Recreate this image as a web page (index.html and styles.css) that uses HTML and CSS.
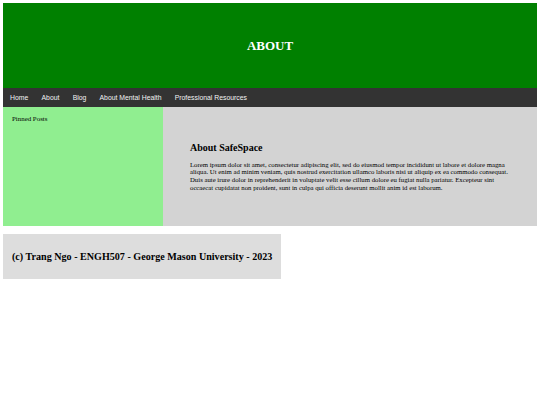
FILE: index.html
```html
<!DOCTYPE html>
<html>
<head>
<meta charset="utf-8">
<link rel="stylesheet" href="styles.css">
</head>
<body>
<header class="banner"><h1 class="banner-title">ABOUT</h1></header>
<nav class="topnav">
  <a class="nav-link" href="#">Home</a>
  <a class="nav-link" href="#">About</a>
  <a class="nav-link" href="#">Blog</a>
  <a class="nav-link" href="#">About Mental Health</a>
  <a class="nav-link" href="#">Professional Resources</a>
</nav>
<div class="row">
  <aside class="sidebar"><p class="sidebar-title">Pinned Posts</p></aside>
  <main class="main">
    <h2 class="main-title">About SafeSpace</h2>
    <p class="main-text">Lorem ipsum dolor sit amet, consectetur adipiscing elit, sed do eiusmod tempor incididunt ut labore et dolore magna aliqua. Ut enim ad minim veniam, quis nostrud exercitation ullamco laboris nisi ut aliquip ex ea commodo consequat. Duis aute irure dolor in reprehenderit in voluptate velit esse cillum dolore eu fugiat nulla pariatur. Excepteur sint occaecat cupidatat non proident, sunt in culpa qui officia deserunt mollit anim id est laborum.</p>
  </main>
</div>
<footer class="footer"><h2 class="footer-text">(c) Trang Ngo - ENGH507 - George Mason University - 2023</h2></footer>
</body>
</html>
```
FILE: styles.css
```css
html, body { background: #fff; }
body {
  margin: 3px;
  font-family: "Liberation Serif", "Times New Roman", serif;
  color: #000;
}
.banner {
  background: #008000;
  height: 85px;
  display: flex;
  align-items: center;
  justify-content: center;
}
.banner-title {
  margin: 0;
  color: #fff;
  font-size: 13px;
  font-weight: bold;
}
.topnav {
  background: #333;
  height: 19px;
  display: flex;
  align-items: center;
  padding-left: 0.5px;
}
.nav-link {
  color: #f2f2f2;
  text-decoration: none;
  font-family: "Liberation Sans", Arial, sans-serif;
  font-size: 6.85px;
  padding: 0 6.6px;
}
.row {
  display: flex;
  height: 119px;
}
.sidebar {
  width: 160px;
  background: #90ee90;
  padding: 8px 9px;
  box-sizing: border-box;
}
.sidebar-title {
  margin: 0;
  font-size: 6.9px;
}
.main {
  flex: 1;
  background: #d3d3d3;
  display: flex;
  flex-direction: column;
  justify-content: center;
  padding: 0 24px 0 27px;
}
.main-title {
  margin: 0 0 8px;
  font-size: 10px;
  font-weight: bold;
}
.main-text {
  margin: 0;
  font-size: 6.75px;
  line-height: 7.7px;
}
.footer {
  margin-top: 8px;
  width: 278px;
  height: 45px;
  background: #ddd;
  display: flex;
  align-items: center;
  padding-left: 9px;
  box-sizing: border-box;
}
.footer-text {
  margin: 0;
  font-size: 10.1px;
  font-weight: bold;
}
```
